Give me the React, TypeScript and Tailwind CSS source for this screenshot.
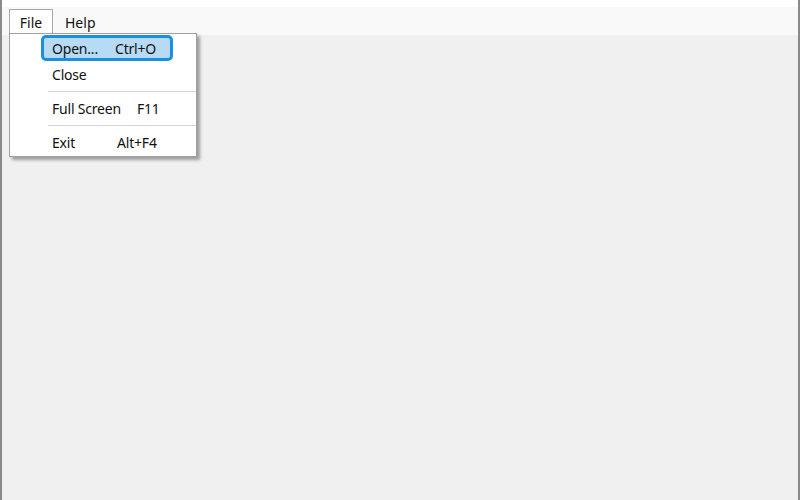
const font = { fontFamily: '"Noto Sans", "Open Sans", sans-serif' };

type Item =
  | { kind: "item"; label: string; shortcut?: string; active?: boolean }
  | { kind: "sep" };

const items: Item[] = [
  { kind: "item", label: "Open...", shortcut: "Ctrl+O", active: true },
  { kind: "item", label: "Close" },
  { kind: "sep" },
  { kind: "item", label: "Full Screen", shortcut: "F11" },
  { kind: "sep" },
  { kind: "item", label: "Exit", shortcut: "Alt+F4" },
];

const shortcutLeft: Record<string, string> = {
  "Ctrl+O": "ml-[105px]",
  F11: "ml-[127px]",
  "Alt+F4": "ml-[107px]",
};

function FileMenu() {
  return (
    <div className="absolute left-[7px] top-[33px] z-10 w-[188px] border border-[#a0a0a0] bg-white pt-[1px] pb-[1px] shadow-[3px_3px_3px_rgba(0,0,0,0.35)]">
      {items.map((it, i) =>
        it.kind === "sep" ? (
          <div key={i} className="flex h-[8px] items-center pl-[38px]">
            <div className="h-px w-full bg-[#d4d4d4]" />
          </div>
        ) : (
          <div key={i} className="relative flex h-[26px] items-center pl-[42px] text-[14px] tracking-[-0.2px] text-[#111]">
            {it.active && (
              <div className="absolute inset-y-0 left-[31px] w-[132px] rounded-[5px] border-[3px] border-[#1c8fe0] bg-[#b7daf5]" />
            )}
            <span className="relative">{it.label}</span>
            {it.shortcut && (
              <span className={"absolute left-0 " + shortcutLeft[it.shortcut]}>{it.shortcut}</span>
            )}
          </div>
        )
      )}
    </div>
  );
}

export default function App() {
  return (
    <div
      className="relative flex h-[500px] w-[800px] flex-col border-x-2 border-[#8a8a8a] bg-white"
      style={font}
    >
      <div className="h-[7px] bg-white" />
      <div className="flex h-[28px] items-start bg-[#f9f9f9] text-[14px] text-[#111]">
        <div className="ml-[7px] mt-[2px] flex h-[26px] w-[44px] items-center justify-center border border-b-0 border-[#a8a8a8] bg-white">
          File
        </div>
        <div className="ml-[12px] mt-[2px] flex h-[26px] items-center">Help</div>
      </div>
      <div className="flex-1 bg-[#f0f0f0]" />
      <FileMenu />
    </div>
  );
}
